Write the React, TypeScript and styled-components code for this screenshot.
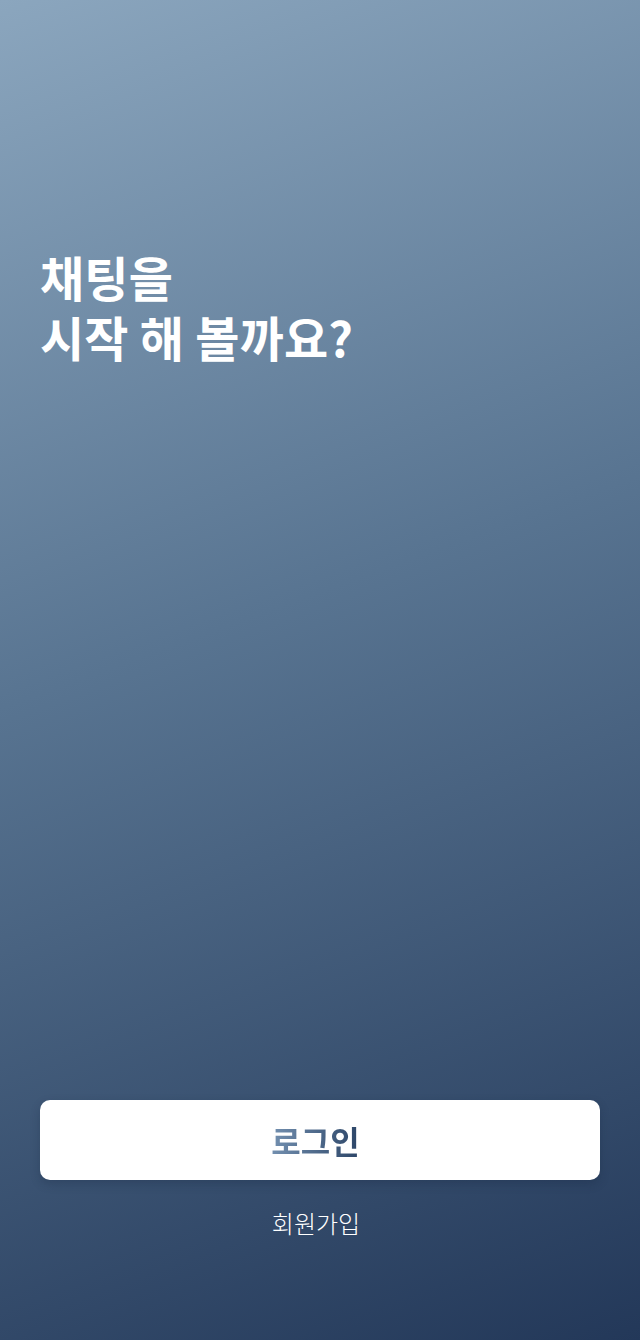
import React from "react";
import styled, { createGlobalStyle } from "styled-components";

const Global = createGlobalStyle`
  html, body { margin: 0; padding: 0; }
  body { font-family: "Noto Sans CJK KR", "Noto Sans", sans-serif; }
  * { box-sizing: border-box; }
`;

const Screen = styled.div`
  width: 640px;
  height: 1340px;
  background: linear-gradient(160deg, #8ba6be 0%, #587491 45%, #233859 100%);
  display: flex;
  flex-direction: column;
  padding: 246px 40px 101px;
`;

const Title = styled.h1`
  margin: 0;
  color: #ffffff;
  font-size: 48px;
  font-weight: 700;
  line-height: 60px;
  letter-spacing: 0.2px;
`;

const Spacer = styled.div`
  flex: 1;
`;

const Actions = styled.div`
  display: flex;
  flex-direction: column;
  align-items: center;
  gap: 27px;
`;

const LoginButton = styled.button`
  width: 100%;
  height: 80px;
  border: none;
  border-radius: 10px;
  background: #ffffff;
  box-shadow: 0 4px 10px rgba(20, 35, 60, 0.25);
  display: flex;
  align-items: center;
  justify-content: center;
  cursor: pointer;
  font-family: inherit;
  padding: 0 9px 0 0;
`;

const LoginText = styled.span`
  font-size: 32px;
  font-weight: 700;
  background: linear-gradient(90deg, #7390b0 0%, #2c4567 100%);
  -webkit-background-clip: text;
  background-clip: text;
  color: transparent;
`;

const SignUp = styled.a`
  color: #ffffff;
  font-size: 24px;
  font-weight: 300;
  line-height: 32px;
  text-decoration: none;
  cursor: pointer;
  padding-right: 8px;
`;

export default function App() {
  return (
    <>
      <Global />
      <Screen>
        <Title>
          채팅을
          <br />
          시작 해 볼까요?
        </Title>
        <Spacer />
        <Actions>
          <LoginButton>
            <LoginText>로그인</LoginText>
          </LoginButton>
          <SignUp>회원가입</SignUp>
        </Actions>
      </Screen>
    </>
  );
}
